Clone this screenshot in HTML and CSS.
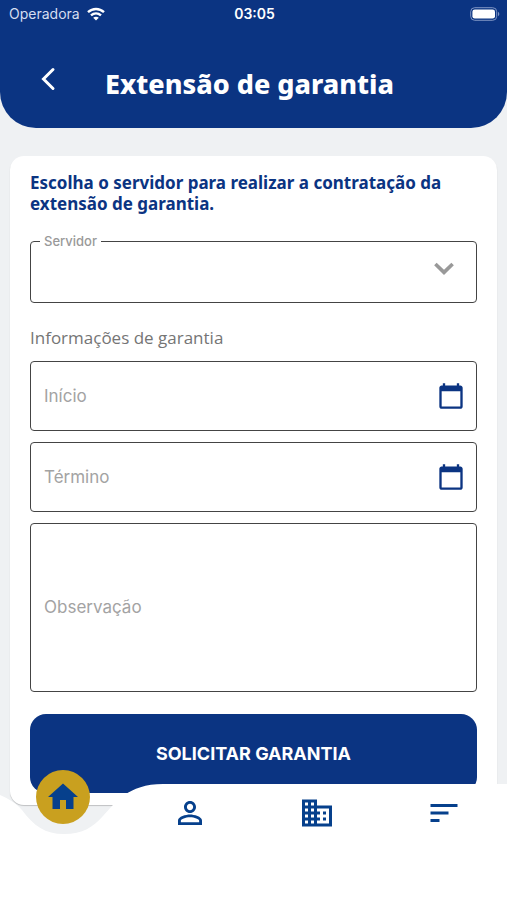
FILE: index.html
```html
<!DOCTYPE html>
<html lang="pt-BR">
<head>
    <meta charset="UTF-8">
    <meta name="viewport" content="width=device-width, initial-scale=1.0">
    <title>Extensão de garantia</title>
    <link rel="stylesheet" href="styles.css">
</head>
<body>
    <header class="header">
        <div class="status-bar">
            <div class="carrier">
                <span>Operadora</span>
                <svg width="18" height="14" viewBox="0 0 18 14" fill="none" stroke="#fff" stroke-width="2.4">
                    <path d="M1 5.2C5.6.9 12.4.9 17 5.2"/>
                    <path d="M4 8.4c2.9-2.6 7.1-2.6 10 0"/>
                    <path d="M9 13.6 6.2 10.8c1.6-1.5 4-1.5 5.6 0z" fill="#fff" stroke="none"/>
                </svg>
            </div>
            <span class="time">03:05</span>
            <svg class="battery" width="30" height="14" viewBox="0 0 30 14">
                <rect x=".7" y=".7" width="26" height="12.6" rx="4" fill="none" stroke="#7f95c4" stroke-width="1"/>
                <rect x="2.4" y="2.4" width="22.6" height="9.2" rx="2.4" fill="#fff"/>
                <path d="M28 4.8c1.8.8 1.8 3.6 0 4.4z" fill="#7f95c4"/>
            </svg>
        </div>
        <div class="title-bar">
            <button type="button" class="back-btn" aria-label="Voltar">
                <svg width="16" height="24" viewBox="0 0 16 24" fill="none" stroke="#fff" stroke-width="3" stroke-linecap="round">
                    <path d="M13 2.5 3.5 12l9.5 9.5"/>
                </svg>
            </button>
            <h1>Extensão de garantia</h1>
        </div>
    </header>

    <main class="content">
        <form class="card">
            <h2>Escolha o servidor para realizar a contratação da extensão de garantia.</h2>

            <div class="select-field">
                <label for="servidor">Servidor</label>
                <select id="servidor">
                    <option value="" selected></option>
                </select>
                <svg class="chevron" width="20" height="14" viewBox="0 0 20 14" fill="none" stroke="#999" stroke-width="3.6">
                    <path d="m1.4 2 8.6 8.4L18.6 2"/>
                </svg>
            </div>

            <h3>Informações de garantia</h3>

            <div class="fields">
                <div class="date-field">
                    <input type="text" id="inicio" placeholder="Início" aria-label="Início">
                    <button type="button" class="calendar-btn" aria-label="Início">
                        <svg width="28" height="28" viewBox="0 0 24 24" fill="#0b3482">
                            <path d="M20 3h-1V1h-2v2H7V1H5v2H4c-1.1 0-2 .9-2 2v16c0 1.1.9 2 2 2h16c1.1 0 2-.9 2-2V5c0-1.1-.9-2-2-2zm0 18H4V8h16v13z"/>
                        </svg>
                    </button>
                </div>
                <div class="date-field">
                    <input type="text" id="termino" placeholder="Término" aria-label="Término">
                    <button type="button" class="calendar-btn" aria-label="Término">
                        <svg width="28" height="28" viewBox="0 0 24 24" fill="#0b3482">
                            <path d="M20 3h-1V1h-2v2H7V1H5v2H4c-1.1 0-2 .9-2 2v16c0 1.1.9 2 2 2h16c1.1 0 2-.9 2-2V5c0-1.1-.9-2-2-2zm0 18H4V8h16v13z"/>
                        </svg>
                    </button>
                </div>
                <textarea id="observacao" class="notes" placeholder="Observação" aria-label="Observação"></textarea>
            </div>

            <button type="submit" class="submit-btn">SOLICITAR GARANTIA</button>
        </form>
    </main>

    <nav class="tab-bar">
        <svg class="tab-shape" viewBox="0 0 507 116" preserveAspectRatio="none" fill="#fff">
            <path d="M0 11C9 15 16 19 22 26 34 42 45 50 64 50 83 50 93 43 103 32 115 19 128 0 163 0H507V116H0Z"/>
        </svg>
        <div class="tabs">
            <a href="#" class="tab home" aria-label="Início">
                <svg width="36" height="36" viewBox="0 0 24 24" fill="#06408c">
                    <path d="M10 20v-6h4v6h5v-8h3L12 3 2 12h3v8z"/>
                </svg>
            </a>
            <a href="#" class="tab" aria-label="Perfil">
                <svg width="36" height="36" viewBox="0 0 24 24" fill="#06408c">
                    <path d="M12 5.9c1.16 0 2.1.94 2.1 2.1s-.94 2.1-2.1 2.1S9.900 9.160 9.900 8s.94-2.100 2.100-2.100m0 9c2.970 0 6.100 1.460 6.100 2.100v1.100H5.900V17c0-.640 3.130-2.100 6.100-2.100M12 4C9.790 4 8 5.790 8 8s1.790 4 4 4 4-1.790 4-4-1.790-4-4-4zm0 9c-2.670 0-8 1.340-8 4v3h16v-3c0-2.660-5.330-4-8-4z"/>
                </svg>
            </a>
            <a href="#" class="tab" aria-label="Empresa">
                <svg width="36" height="36" viewBox="0 0 24 24" fill="#06408c">
                    <path d="M12 7V3H2v18h20V7H12zM6 19H4v-2h2v2zm0-4H4v-2h2v2zm0-4H4V9h2v2zm0-4H4V5h2v2zm4 12H8v-2h2v2zm0-4H8v-2h2v2zm0-4H8V9h2v2zm0-4H8V5h2v2zm10 12h-8v-2h2v-2h-2v-2h2v-2h-2V9h8v10zm-2-8h-2v2h2v-2zm0 4h-2v2h2v-2z"/>
                </svg>
            </a>
            <a href="#" class="tab" aria-label="Menu">
                <svg width="36" height="36" viewBox="0 0 24 24" fill="#06408c">
                    <path d="M3 18h6v-2H3v2zM3 6v2h18V6H3zm0 7h12v-2H3v2z"/>
                </svg>
            </a>
        </div>
    </nav>
</body>
</html>
```

FILE: styles.css
```css
* {
    margin: 0;
    padding: 0;
    box-sizing: border-box;
}

body {
    min-height: 100vh;
    background-color: #eff1f3;
    font-family: 'Inter', sans-serif;
}

.header {
    height: 128px;
    background-color: #0b3482;
    border-radius: 0 0 36px 36px;
    color: white;
}

.status-bar {
    display: grid;
    grid-template-columns: 1fr auto 1fr;
    align-items: center;
    height: 27px;
    padding: 0 7px 0 9px;
    font-size: 14px;
    line-height: 18px;
}

.carrier {
    display: flex;
    align-items: center;
    gap: 7px;
    color: #d5def0;
}

.time {
    font-weight: 600;
}

.battery {
    justify-self: end;
}

.title-bar {
    display: grid;
    grid-template-columns: 48px 1fr 56px;
    align-items: center;
    height: 112px;
    padding: 0 24px;
}

.back-btn {
    height: 48px;
    padding-bottom: 8px;
    border: none;
    background: none;
    cursor: pointer;
}

.back-btn svg {
    display: block;
    margin: 0 auto;
}

h1 {
    font-family: 'Noto Sans', sans-serif;
    font-size: 27px;
    font-weight: 800;
    text-align: center;
    white-space: nowrap;
}

.content {
    padding: 28px 10px 95px;
}

.card {
    padding: 16px 20px 12px;
    border-radius: 14px;
    background-color: white;
    box-shadow: 0 1px 1px rgba(0, 0, 0, 0.2);
}

h2 {
    color: #0b3482;
    font-family: 'Noto Sans', sans-serif;
    font-size: 17px;
    font-weight: 700;
    line-height: 21px;
}

.select-field {
    position: relative;
    margin-top: 27px;
}

.select-field label {
    position: absolute;
    top: -8px;
    left: 10px;
    padding: 0 4px;
    background-color: white;
    color: #999;
    font-size: 13px;
    font-weight: 500;
    line-height: 16px;
}

.select-field select {
    display: block;
    width: 100%;
    height: 62px;
    padding: 0 14px;
    border: 1px solid #444;
    border-radius: 4px;
    background-color: white;
    font-size: 17px;
    appearance: none;
}

.chevron {
    position: absolute;
    top: 21px;
    right: 23px;
    pointer-events: none;
}

h3 {
    margin: 23px 0 11px;
    color: #757575;
    font-family: 'Open Sans', sans-serif;
    font-size: 17px;
    font-weight: 500;
    line-height: 24px;
}

.fields {
    display: flex;
    flex-direction: column;
    gap: 11px;
}

.date-field {
    display: flex;
    align-items: center;
    height: 70px;
    padding: 0 11px 0 13px;
    border: 1px solid #444;
    border-radius: 4px;
}

.date-field input {
    flex: 1;
    min-width: 0;
    border: none;
    outline: none;
    font-family: inherit;
    font-size: 17px;
}

.calendar-btn {
    border: none;
    background: none;
    cursor: pointer;
}

.calendar-btn svg {
    display: block;
}

.notes {
    display: block;
    width: 100%;
    height: 169px;
    padding: 72px 13px 0;
    border: 1px solid #444;
    border-radius: 4px;
    font-family: inherit;
    font-size: 17px;
    line-height: 22px;
    resize: none;
}

.date-field input::placeholder,
.notes::placeholder {
    color: #a3a3a3;
}

.submit-btn {
    width: 100%;
    height: 79px;
    margin-top: 22px;
    border: none;
    border-radius: 16px;
    background-color: #0b3482;
    color: white;
    font-family: inherit;
    font-size: 18px;
    font-weight: 700;
    cursor: pointer;
}

.tab-bar {
    position: fixed;
    right: 0;
    bottom: 0;
    left: 0;
    height: 116px;
}

.tab-shape {
    position: absolute;
    width: 100%;
    height: 100%;
}

.tabs {
    position: relative;
    display: grid;
    grid-template-rows: 58px;
    grid-template-columns: repeat(4, 1fr);
    place-items: center;
}

.tab {
    display: flex;
    align-items: center;
    justify-content: center;
}

.home {
    width: 54px;
    height: 54px;
    margin-bottom: 32px;
    border-radius: 50%;
    background-color: #c9a01f;
}
```
